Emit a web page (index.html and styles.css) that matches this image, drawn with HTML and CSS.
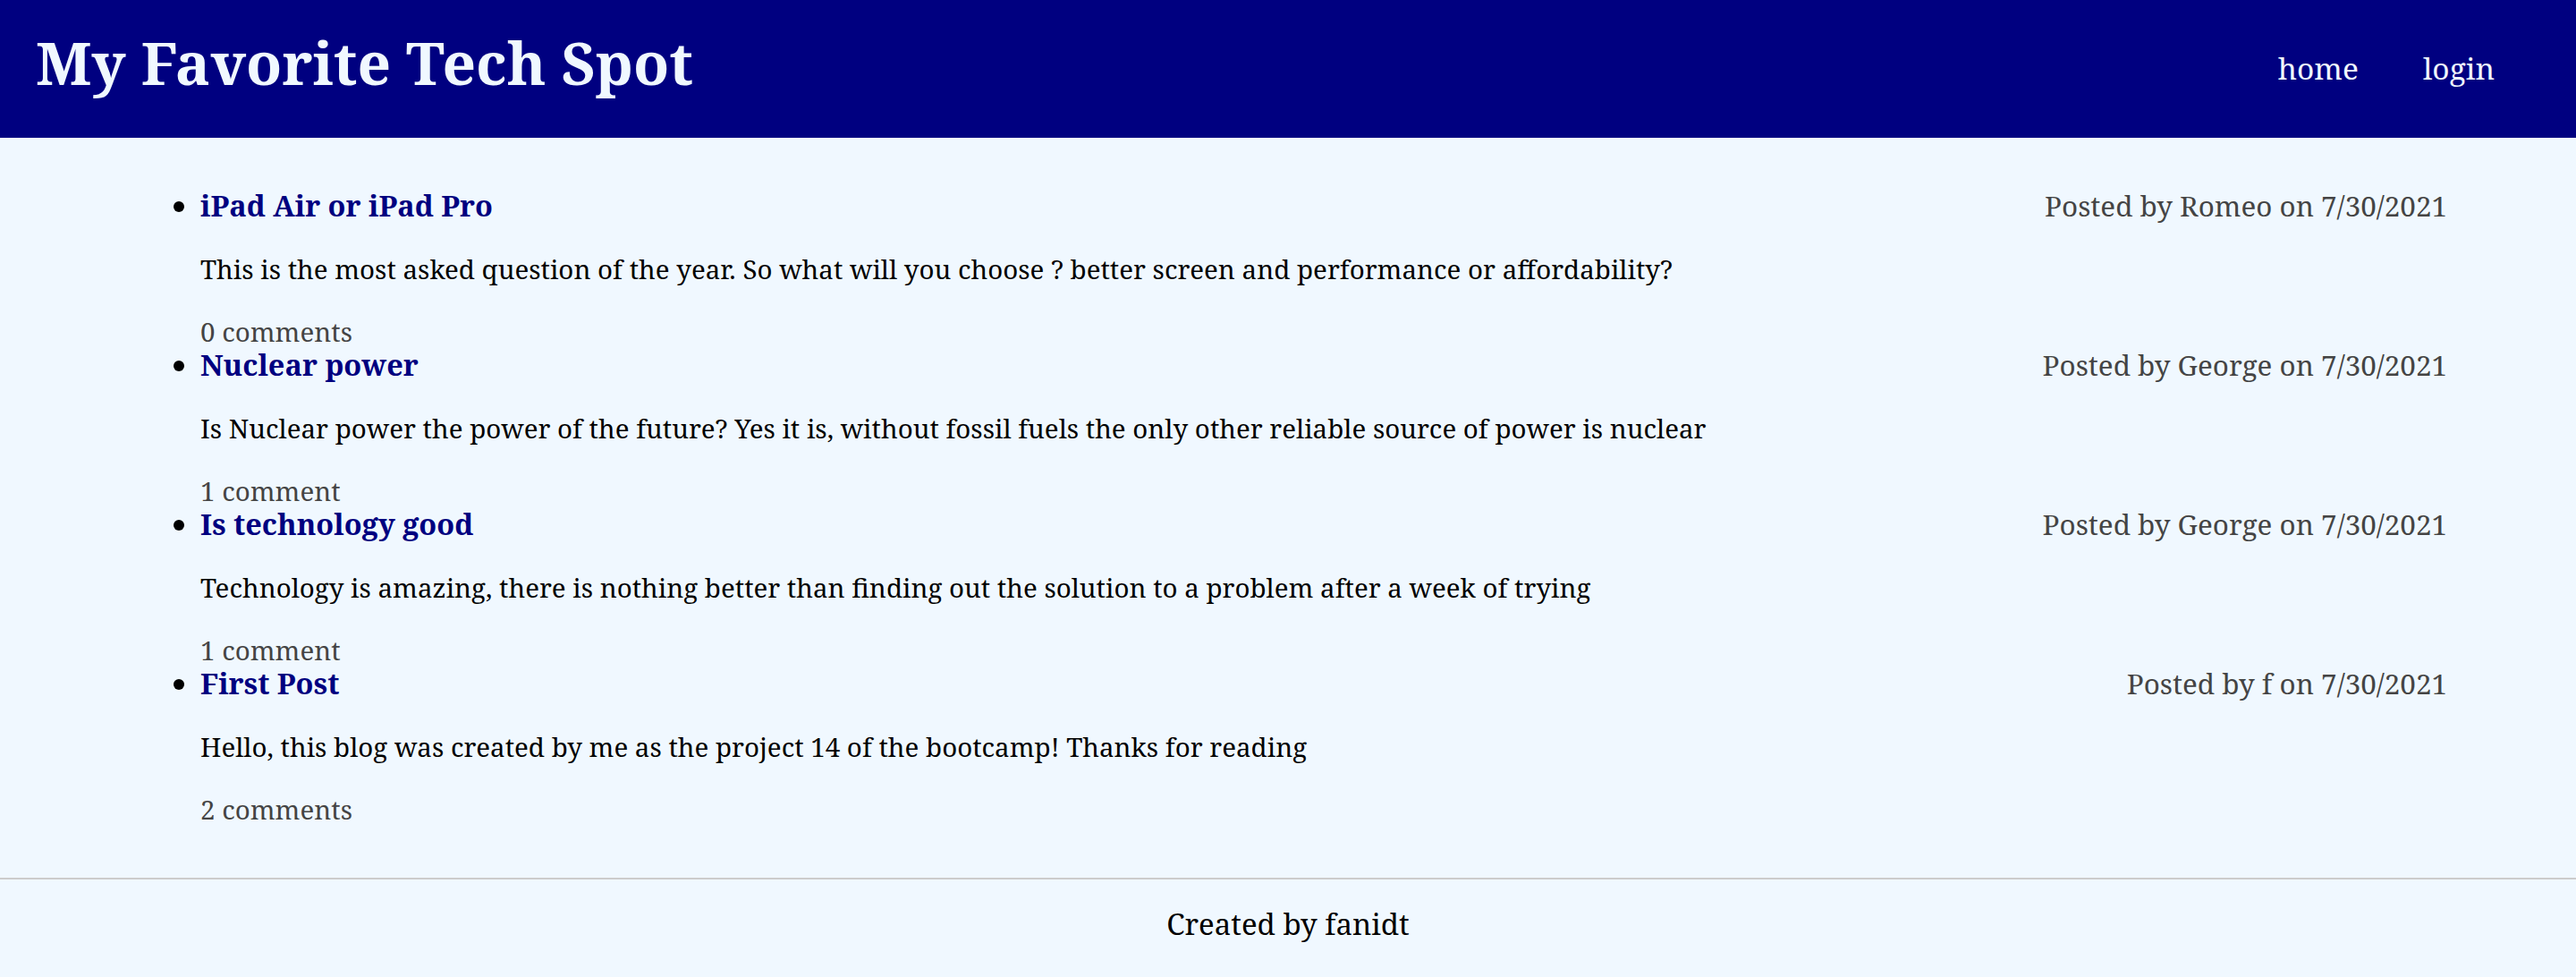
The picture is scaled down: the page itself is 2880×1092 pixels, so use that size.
FILE: index.html
```html
<!DOCTYPE html>
<html lang="en">
<head>
<meta charset="utf-8">
<title>My Favorite Tech Spot</title>
<link rel="stylesheet" href="styles.css">
</head>
<body>
<header class="site-header">
  <h1 class="site-title">My Favorite Tech Spot</h1>
  <nav class="site-nav">
    <a href="#" class="nav-link">home</a>
    <a href="#" class="nav-link">login</a>
  </nav>
</header>
<main class="content">
  <ul class="post-list">
    <li class="post">
      <div class="post-head">
        <a href="#" class="post-title">iPad Air or iPad Pro</a>
        <span class="post-meta">Posted by Romeo on 7/30/2021</span>
      </div>
      <p class="post-body">This is the most asked question of the year. So what will you choose ? better screen and performance or affordability?</p>
      <p class="post-comments">0 comments</p>
    </li>
    <li class="post">
      <div class="post-head">
        <a href="#" class="post-title">Nuclear power</a>
        <span class="post-meta">Posted by George on 7/30/2021</span>
      </div>
      <p class="post-body">Is Nuclear power the power of the future? Yes it is, without fossil fuels the only other reliable source of power is nuclear</p>
      <p class="post-comments">1 comment</p>
    </li>
    <li class="post">
      <div class="post-head">
        <a href="#" class="post-title">Is technology good</a>
        <span class="post-meta">Posted by George on 7/30/2021</span>
      </div>
      <p class="post-body">Technology is amazing, there is nothing better than finding out the solution to a problem after a week of trying</p>
      <p class="post-comments">1 comment</p>
    </li>
    <li class="post">
      <div class="post-head">
        <a href="#" class="post-title">First Post</a>
        <span class="post-meta">Posted by f on 7/30/2021</span>
      </div>
      <p class="post-body">Hello, this blog was created by me as the project 14 of the bootcamp! Thanks for reading</p>
      <p class="post-comments">2 comments</p>
    </li>
  </ul>
</main>
<footer class="site-footer">Created by fanidt</footer>
</body>
</html>
```
FILE: styles.css
```css
html, body {
  margin: 0;
  padding: 0;
}

body {
  background: #f0f8ff;
  color: #000;
  font-family: "Noto Serif", "DejaVu Serif Condensed", "Liberation Serif", serif;
  font-size: 29.5px;
  min-height: 1092px;
  display: flex;
  flex-direction: column;
}

.site-header {
  background: #000080;
  height: 154px;
  box-sizing: border-box;
  padding: 30px 91px 0 40px;
  display: flex;
  justify-content: space-between;
  align-items: flex-start;
}

.site-title {
  margin: 0;
  color: #f0f8ff;
  font-size: 65.7px;
  font-weight: 700;
  line-height: 80px;
}

.site-nav {
  display: flex;
  gap: 72px;
  margin-top: 26px;
}

.nav-link {
  color: #f0f8ff;
  text-decoration: none;
  font-size: 33.5px;
  line-height: 40px;
}

.content {
  width: 90%;
  margin: 0 auto;
  padding-top: 57px;
}

.post-list {
  margin: 0;
  padding: 0 0 0 80px;
}

.post {
  font-size: 29.5px;
  line-height: 38px;
}

.post::marker {
  font-size: 33px;
}

.post-head {
  display: flex;
  justify-content: space-between;
  align-items: baseline;
  height: 38px;
  line-height: 38px;
}

.post-title {
  color: #000080;
  text-decoration: none;
  font-weight: 700;
  font-size: 32.5px;
}

.post-meta {
  color: #444;
  font-size: 31.4px;
  line-height: 30px;
}

.post-body {
  margin: 33px 0 0;
  line-height: 38px;
}

.post-comments {
  margin: 32px 0 0;
  line-height: 37px;
  color: #444;
}

.site-footer {
  margin-top: 58px;
  border-top: 2px solid #ccc;
  padding: 30px 0 39px;
  text-align: center;
  font-size: 33px;
  line-height: 40px;
}
```
